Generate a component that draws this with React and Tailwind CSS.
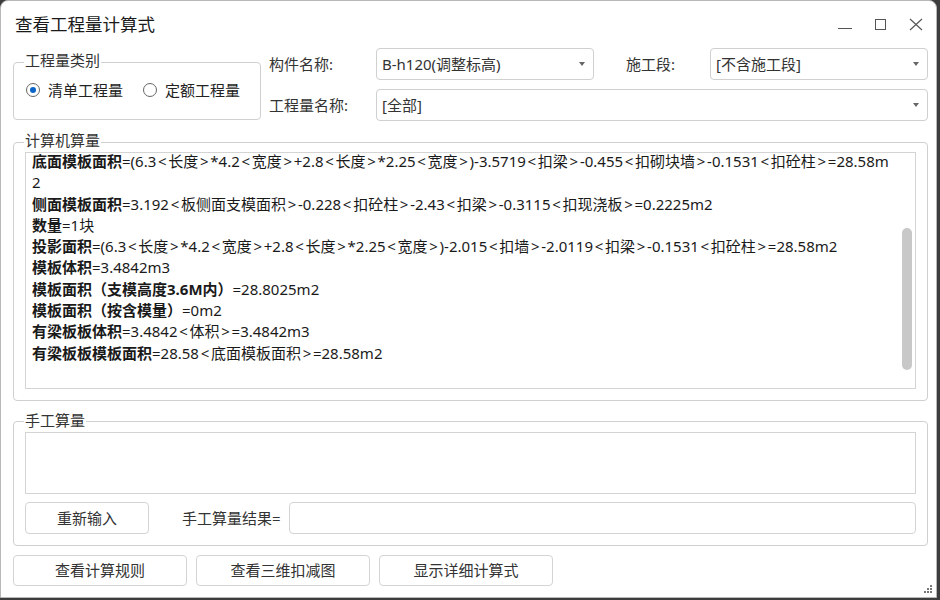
import React from 'react'

const FONT = { fontFamily: '"Noto Sans", "Noto Sans CJK SC", sans-serif' }

// formula text: give < and > a little room, like the reference font does
function Formula({ text }) {
  return text.split(/([<>])/).map((part, i) =>
    part === '<' || part === '>' ? (
      <span key={i} className="inline-block w-[12px] text-center">{part}</span>
    ) : (
      <span key={i}>{part}</span>
    )
  )
}

const lines = [
  ['底面模板面积', '=(6.3<长度>*4.2<宽度>+2.8<长度>*2.25<宽度>)-3.5719<扣梁>-0.455<扣砌块墙>-0.1531<扣砼柱>=28.58m'],
  ['', '2'],
  ['侧面模板面积', '=3.192<板侧面支模面积>-0.228<扣砼柱>-2.43<扣梁>-0.3115<扣现浇板>=0.2225m2'],
  ['数量', '=1块'],
  ['投影面积', '=(6.3<长度>*4.2<宽度>+2.8<长度>*2.25<宽度>)-2.015<扣墙>-2.0119<扣梁>-0.1531<扣砼柱>=28.58m2'],
  ['模板体积', '=3.4842m3'],
  ['模板面积（支模高度3.6M内）', '=28.8025m2'],
  ['模板面积（按含模量）', '=0m2'],
  ['有梁板板体积', '=3.4842<体积>=3.4842m3'],
  ['有梁板板模板面积', '=28.58<底面模板面积>=28.58m2'],
]

function Combo({ value, className = '' }) {
  return (
    <div className={`flex items-center justify-between h-full border border-[#d0d0d0] rounded-[4px] bg-white pl-[5px] pr-[8px] text-[#333] ${className}`}>
      <span>{value}</span>
      <svg width="6" height="4" viewBox="0 0 6 4"><path d="M0 0h6L3 4z" fill="#666" /></svg>
    </div>
  )
}

function Radio({ checked, label }) {
  return (
    <label className="flex items-center gap-[8px]">
      <span className="w-[14px] h-[14px] rounded-full border border-[#666] flex items-center justify-center bg-white">
        {checked && <span className="w-[6px] h-[6px] rounded-full bg-[#0a64c8]" />}
      </span>
      <span className="text-[#222]">{label}</span>
    </label>
  )
}

function Button({ children, className = '' }) {
  return (
    <button className={`h-[31px] border border-[#d4d4d4] rounded-[4px] bg-white text-[#333] ${className}`}>
      {children}
    </button>
  )
}

export default function App() {
  return (
    <div className="w-[940px] h-[600px] bg-[#3d3d3d] text-[15px]" style={FONT}>
      <div className="relative w-[937px] h-[598px] bg-white border border-[#b8b8b8] rounded-t-[8px] flex flex-col">
        {/* title bar */}
        <div className="h-[46px] shrink-0 flex items-center justify-between pl-[14px]">
          <span className="text-[17.5px] text-[#1a1a1a]">查看工程量计算式</span>
          <div className="flex items-center h-full">
            <svg width="16" height="16" viewBox="0 0 16 16" className="mr-[21px] mt-[1px]">
              <path d="M1 11.5h14" stroke="#555" strokeWidth="1" />
            </svg>
            <svg width="13" height="13" viewBox="0 0 13 13" className="mr-[22px]">
              <rect x="1.5" y="1.5" width="10" height="10" fill="none" stroke="#555" strokeWidth="1" />
            </svg>
            <svg width="14" height="13" viewBox="0 0 14 13" className="mr-[13px]">
              <path d="M1 1l12 11M13 1L1 12" stroke="#555" strokeWidth="1.1" />
            </svg>
          </div>
        </div>

        <div className="flex-1 flex flex-col pl-[12px] pr-[8px]">
          {/* top section */}
          <div className="flex mt-[1px]">
            <fieldset className="w-[248px] h-[68px] mt-[4px] border border-[#d0d0d0] rounded-[4px] px-[12px] pt-[8px]">
              <legend className="ml-[-2px] px-[1px] leading-[16px] pb-[4px] text-[#333]">工程量类别</legend>
              <div className="flex items-center h-[20px] gap-[20px]">
                <Radio checked label="清单工程量" />
                <Radio label="定额工程量" />
              </div>
            </fieldset>
            <div className="flex-1 ml-[8px] grid grid-cols-[107px_218px_116px_1fr] grid-rows-[32px_32px] gap-y-[9px] items-center">
              <span className="text-[#333]">构件名称:</span>
              <Combo value="B-h120(调整标高)" />
              <span className="pl-[32px] text-[#333]">施工段:</span>
              <Combo value="[不含施工段]" />
              <span className="text-[#333]">工程量名称:</span>
              <Combo value="[全部]" className="col-span-3" />
            </div>
          </div>

          {/* computer quantities */}
          <fieldset className="mt-[11px] border border-[#d0d0d0] rounded-[4px] pl-[11px] pr-[11px] pb-[11px]">
            <legend className="ml-[-1px] px-[1px] leading-[16px] pb-[4px] text-[#333]">计算机算量</legend>
            <div className="relative h-[237px] border border-[#d4d4d4] overflow-hidden pl-[6px]">
              <div className="-mt-[2px] leading-[21.3px] text-[#1a1a1a] whitespace-nowrap">
                {lines.map(([bold, rest], i) => (
                  <div key={i}>
                    {bold && <span className="font-bold">{bold}</span>}
                    <Formula text={rest} />
                  </div>
                ))}
              </div>
              <div className="absolute right-[3px] top-[75px] w-[10px] h-[142px] rounded-full bg-[#c8c8c8]" />
            </div>
          </fieldset>

          {/* manual quantities */}
          <fieldset className="mt-[10px] border border-[#d0d0d0] rounded-[4px] px-[11px] pt-[1px] pb-[11px]">
            <legend className="ml-[-1px] px-[1px] leading-[18px] pb-[2px] text-[#333]">手工算量</legend>
            <div className="h-[62px] border border-[#d4d4d4]" />
            <div className="flex items-center mt-[8px] h-[32px]">
              <Button className="w-[124px] h-[32px]">重新输入</Button>
              <span className="ml-[33px] text-[#333]">手工算量结果=</span>
              <div className="flex-1 ml-[8px] h-[32px] border border-[#d4d4d4] rounded-[4px]" />
            </div>
          </fieldset>

          {/* bottom buttons */}
          <div className="flex gap-[9px] mt-[9px]">
            <Button className="w-[174px]">查看计算规则</Button>
            <Button className="w-[174px]">查看三维扣减图</Button>
            <Button className="w-[174px]">显示详细计算式</Button>
          </div>
        </div>

        {/* resize grip */}
        <svg width="9" height="9" viewBox="0 0 9 9" className="absolute right-[3px] bottom-[3px]">
          <rect x="6" y="0" width="2" height="2" fill="#777" />
          <rect x="3" y="3" width="2" height="2" fill="#777" />
          <rect x="6" y="3" width="2" height="2" fill="#777" />
          <rect x="0" y="6" width="2" height="2" fill="#777" />
          <rect x="3" y="6" width="2" height="2" fill="#777" />
          <rect x="6" y="6" width="2" height="2" fill="#777" />
        </svg>
      </div>
    </div>
  )
}
